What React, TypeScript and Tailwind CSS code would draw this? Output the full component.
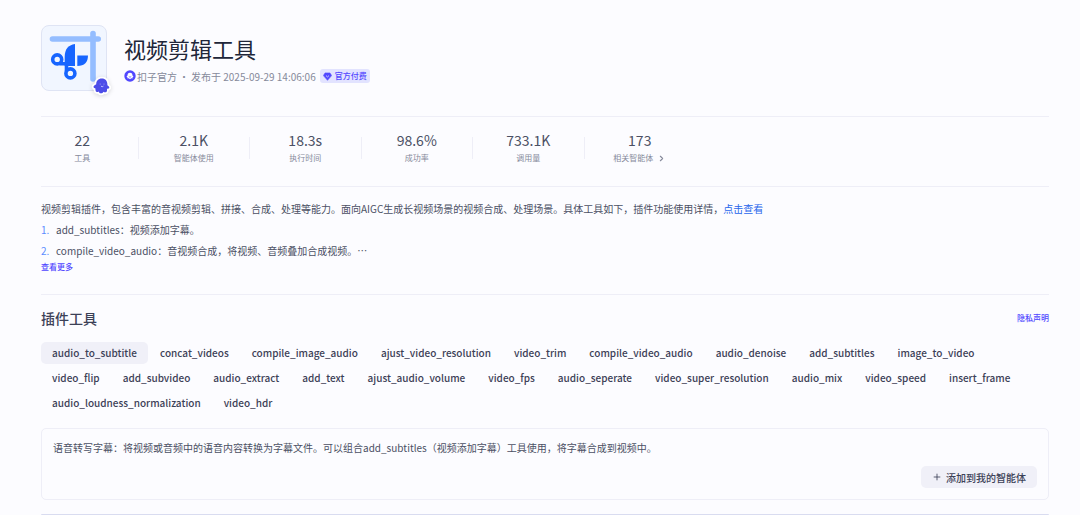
import React, {useState} from 'react';
import {ChevronRight, Plus} from 'lucide-react';

interface StatItem {
    value: string;
    label: string;
    link?: boolean;
}

const stats: StatItem[] = [
    {value: '22', label: '工具'},
    {value: '2.1K', label: '智能体使用'},
    {value: '18.3s', label: '执行时间'},
    {value: '98.6%', label: '成功率'},
    {value: '733.1K', label: '调用量'},
    {value: '173', label: '相关智能体', link: true},
];

const tools = [
    'audio_to_subtitle',
    'concat_videos',
    'compile_image_audio',
    'ajust_video_resolution',
    'video_trim',
    'compile_video_audio',
    'audio_denoise',
    'add_subtitles',
    'image_to_video',
    'video_flip',
    'add_subvideo',
    'audio_extract',
    'add_text',
    'ajust_audio_volume',
    'video_fps',
    'audio_seperate',
    'video_super_resolution',
    'audio_mix',
    'video_speed',
    'insert_frame',
    'audio_loudness_normalization',
    'video_hdr',
];

function PluginIcon() {
    return (
        <svg viewBox="1 1 64 64" className="size-full" aria-hidden="true">
            <g stroke="#94bdff" strokeWidth="5.6" strokeLinecap="round">
                <path d="M11.5 14H57.2" />
                <path d="M52 8.5V54" />
            </g>
            <path d="M34 19V41H23.7V32C23.7 24.5 27 20 34 19Z" fill="#1765ff" />
            <path d="M36.3 30.5H47C47 37 43.5 41 36.3 41Z" fill="#1765ff" />
            <g fill="none" stroke="#1765ff" strokeWidth="3.6">
                <circle cx="16.2" cy="34.4" r="4.5" />
                <circle cx="29.4" cy="48.4" r="4.5" />
                <path d="M18.5 38.8H25.5V46" />
            </g>
        </svg>
    );
}

function CozeBadge() {
    return (
        <svg viewBox="0 0 20 20" className="size-5 drop-shadow-sm" aria-hidden="true">
            <path
                d="M10.8 2.5C7.2 2.500 5.200 5 5.200 8.300L3.300 9.500C2 10.500 2.400 12.200 4.300 12.200L4.600 14.600C4.800 16.300 6.600 16.400 7.700 15.500C8.300 17.900 11.600 18 12.400 15.700C13.800 16.800 15.900 16.500 16 14.500L16 12.800C18.200 13.200 19 11.400 17.600 10.300L16.400 9.200C16.600 5 14.500 2.500 10.800 2.500Z"
                fill="#4d4de8"
                stroke="#ffffff"
                strokeWidth="3.6"
                strokeLinejoin="round"
                paintOrder="stroke"
            />
            <path d="M9.200 7.500V8.700M13 7.500V8.700" stroke="#8f92f5" strokeWidth="0.9" />
            <path d="M10 10.200Q11.200 11.200 12.400 10.200" stroke="#c9caff" strokeWidth="0.9" fill="none" />
        </svg>
    );
}

function AuthorAvatar() {
    return (
        <svg viewBox="0 0 12 12" className="size-3" aria-hidden="true">
            <circle cx="6" cy="6" r="5.7" fill="#5147ff" />
            <path
                d="M6 2.800C4.200 2.800 3.500 4.100 3.500 5.500L2.500 6.700L3.500 7.300V8.500L4.800 8.200L6 9.200L7.200 8.200L8.500 8.500V7.300L9.500 6.700L8.500 5.500C8.500 4.100 7.800 2.800 6 2.800Z"
                fill="#fff"
            />
            <path d="M4.800 6.600Q6 7.800 7.200 6.600" stroke="#5147ff" strokeWidth="0.7" fill="none" />
        </svg>
    );
}

function PaidTag() {
    return (
        <span className="ml-1 flex h-[14px] items-center gap-[3px] rounded-[3px] bg-[#e2e3ff] px-[3px] text-[8px] font-medium text-[#5147ff]">
            <svg viewBox="0 0 10 10" className="size-[9px]" aria-hidden="true">
                <path
                    d="M2.300 1H7.700L9.600 4L5 9.300L0.400 4Z"
                    fill="#5147ff"
                    stroke="#5147ff"
                    strokeWidth="0.6"
                    strokeLinejoin="round"
                />
                <path d="M3.300 4L5 5.500L6.700 4" stroke="#e2e3ff" strokeWidth="0.9" fill="none" />
            </svg>
            官方付费
        </span>
    );
}

function Stats() {
    return (
        <section className="flex h-[69px] w-[640px] max-w-full items-center">
            {stats.map((item, index) => (
                <React.Fragment key={item.label}>
                    {index > 0 && <div className="mx-[14px] mb-2 h-[22px] w-px bg-[#eeeef7]" />}
                    <div className="mb-[7px] flex flex-1 flex-col items-center">
                        <span className="text-[14px] leading-5 text-[#4b5064]">{item.value}</span>
                        {item.link ? (
                            <a
                                href="#agents"
                                className="flex items-center gap-1 text-[8px] leading-4 whitespace-nowrap text-[#868a9b]"
                            >
                                {item.label}
                                <ChevronRight size={9} strokeWidth={3} />
                            </a>
                        ) : (
                            <span className="text-[8px] leading-4 whitespace-nowrap text-[#868a9b]">
                                {item.label}
                            </span>
                        )}
                    </div>
                </React.Fragment>
            ))}
        </section>
    );
}

export default function App() {
    const [active, setActive] = useState(tools[0]);

    return (
        <main className="min-h-screen bg-[#fcfcff] pt-[25px] pr-[31px] pl-[41px] font-['Noto_Sans_CJK_SC',sans-serif] text-[#4b5064]">
            <header className="flex gap-[17px] border-b border-[#eeeef7] pb-[25px]">
                <div className="relative size-[66px] shrink-0 rounded-[8px] border border-[#dfe4f4] bg-[#f1f6ff]">
                    <PluginIcon />
                    <span className="absolute -right-[5px] -bottom-[6px]">
                        <CozeBadge />
                    </span>
                </div>
                <div className="pt-[7px]">
                    <h1 className="text-[22px] leading-8 text-[#202639]">视频剪辑工具</h1>
                    <div className="mt-[5px] flex h-[14px] items-center text-[10px] whitespace-nowrap text-[#868a9b]">
                        <AuthorAvatar />
                        <span className="ml-px">扣子官方</span>
                        <span className="mx-[2px]">·</span>
                        <span>发布于 2025-09-29 14:06:06</span>
                        <PaidTag />
                    </div>
                </div>
            </header>

            <Stats />

            <section className="border-y border-[#eeeef7] pt-[11px] pb-[21px] text-[10px] leading-[21px]">
                <p>
                    视频剪辑插件，包含丰富的音视频剪辑、拼接、合成、处理等能力。面向AIGC生成长视频场景的视频合成、处理场景。具体工具如下，插件功能使用详情，
                    <a href="#detail" className="text-[#2865eb]">点击查看</a>
                </p>
                <ol>
                    <li className="flex">
                        <span className="w-[15px] text-[#5c8dff]">1.</span>
                        add_subtitles：视频添加字幕。
                    </li>
                    <li className="flex">
                        <span className="w-[15px] text-[#5c8dff]">2.</span>
                        compile_video_audio：音视频合成，将视频、音频叠加合成视频。⋯
                    </li>
                </ol>
                <button type="button" className="block text-[8px] leading-3 font-medium text-[#5147ff]">
                    查看更多
                </button>
            </section>

            <section className="pt-[13px]">
                <div className="flex items-center justify-between">
                    <h2 className="text-[14px] leading-5 font-medium text-[#3c4157]">插件工具</h2>
                    <a href="#privacy" className="text-[8px] leading-3 font-medium text-[#5147ff]">隐私声明</a>
                </div>
                <div className="mt-[14px] flex flex-wrap gap-x-px gap-y-[3px]">
                    {tools.map((tool) => (
                        <button
                            key={tool}
                            type="button"
                            onClick={() => setActive(tool)}
                            className={`h-[22px] rounded-[5px] px-[11px] text-[10px] leading-[22px] font-medium text-[#3c4157] ${
                                tool === active ? 'bg-[#f0f0f8]' : ''
                            }`}
                        >
                            {tool}
                        </button>
                    ))}
                </div>
                <div className="mt-[14px] flex flex-col gap-[10px] rounded-[5px] border border-[#eeeef7] p-[11px]">
                    <p className="text-[10px] leading-4">
                        语音转写字幕：将视频或音频中的语音内容转换为字幕文件。可以组合add_subtitles（视频添加字幕）工具使用，将字幕合成到视频中。
                    </p>
                    <button
                        type="button"
                        className="flex h-[22px] items-center gap-1 self-end rounded-[5px] bg-[#f0f0f8] px-[11px] text-[10px] font-medium text-[#3c4157]"
                    >
                        <Plus size={10} strokeWidth={2} />
                        添加到我的智能体
                    </button>
                </div>
                <div className="mt-[14px] h-px rounded-t-[5px] bg-[#d9dcf0]" />
            </section>
        </main>
    );
}
